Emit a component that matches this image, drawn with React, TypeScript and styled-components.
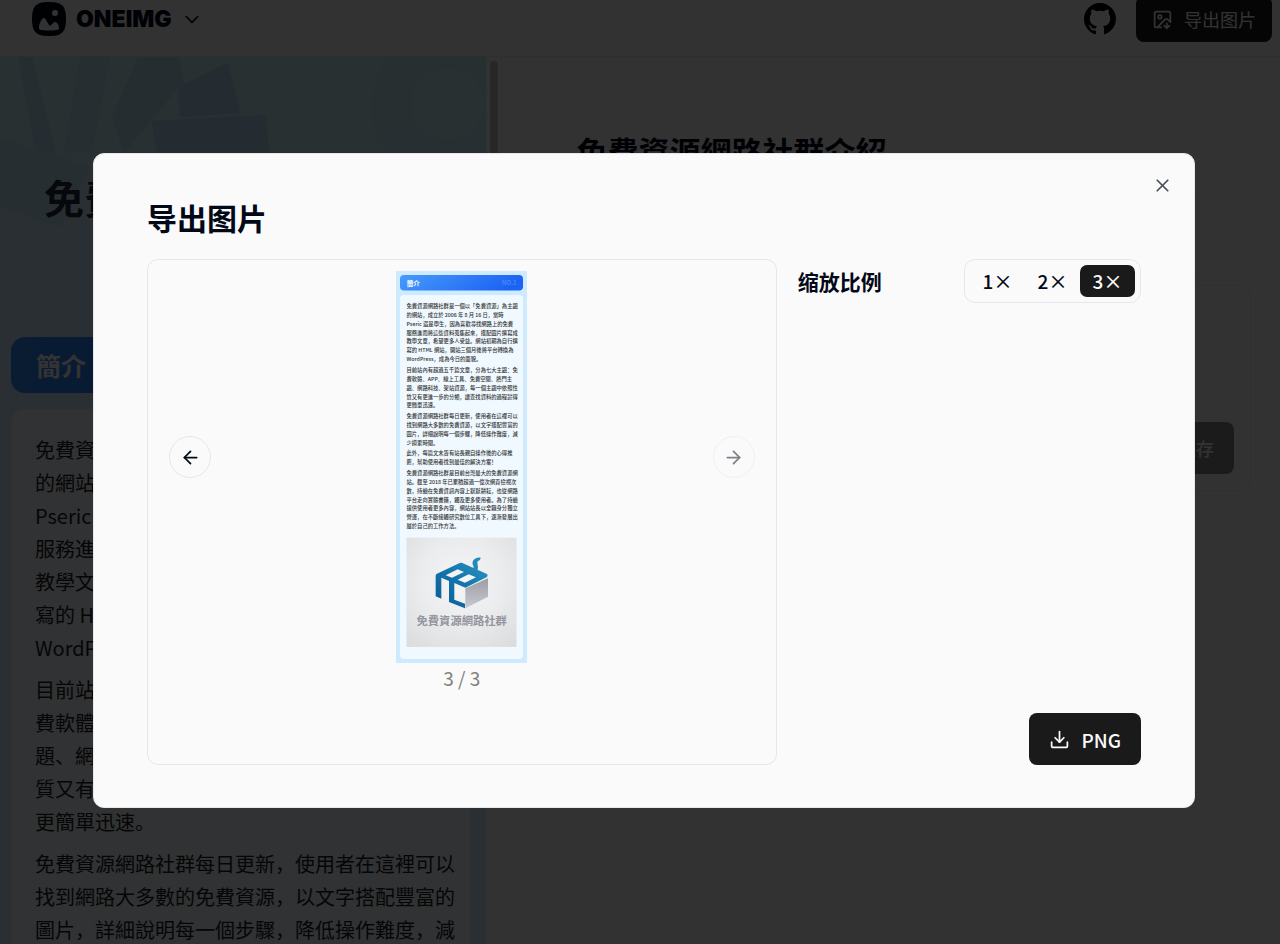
import React from "react";
import styled, { createGlobalStyle, css } from "styled-components";

const FONT = `"Noto Sans CJK SC", "Noto Sans", sans-serif`;

const GlobalStyle = createGlobalStyle`
  *, *::before, *::after { box-sizing: border-box; }
  body {
    margin: 0;
    overflow: hidden;
    background: #fafafa;
    color: #020817;
    font-family: ${FONT};
  }
  button { font: inherit; color: inherit; border: 0; padding: 0; background: none; cursor: pointer; }
  h1, h2, p { margin: 0; }
`;

const PARAGRAPHS: string[][] = [
  [
    "免費資源網路社群是一個以「免費資源」為主題",
    "的網站，成立於 2006 年 8 月 16 日，當時",
    "Pseric 還是學生，因為喜歡尋找網路上的免費",
    "服務進而將這些資料蒐集起來，搭配圖片撰寫成",
    "教學文章，希望更多人受益。網站初期為自行撰",
    "寫的 HTML 網站，開站三個月後將平台轉換為",
    "WordPress，成為今日的面貌。",
  ],
  [
    "目前站內有超過五千篇文章，分為七大主題：免",
    "費軟體、APP、線上工具、免費空間、熱門主",
    "題、網路科技、架站資源，每一個主題中依照性",
    "質又有更進一步的分類，讓查找資料的過程變得",
    "更簡單迅速。",
  ],
  [
    "免費資源網路社群每日更新，使用者在這裡可以",
    "找到網路大多數的免費資源，以文字搭配豐富的",
    "圖片，詳細說明每一個步驟，降低操作難度，減",
    "少摸索時間。",
  ],
  [
    "此外，每篇文末皆有站長親自操作後的心得推",
    "薦，幫助使用者找到最佳的解決方案！",
  ],
  [
    "免費資源網路社群是目前台灣最大的免費資源網",
    "站。截至 2018 年已累積超過一億次網頁檢視次",
    "數，持續在免費資訊內容上默默耕耘，也從網路",
    "平台走向實體書籍，觸及更多使用者。為了持續",
    "提供使用者更多內容，網站站長以全職身分獨立",
    "營運，在不斷接觸研究數位工具下，逐漸發展出",
    "屬於自己的工作方法。",
  ],
];

/* ---------- page behind the dialog ---------- */

const Page = styled.div`
  display: flex;
  flex-direction: column;
  height: calc(100vh + 18px);
  margin-top: -18px;
  overflow: hidden;
`;

const TopBar = styled.header`
  flex: none;
  display: flex;
  align-items: center;
  justify-content: space-between;
  height: 75px;
  padding: 0 8px 0 32px;
  border-bottom: 1px solid #e5e7eb;
`;

const Brand = styled.button`
  display: flex;
  align-items: center;
  gap: 10px;
`;

const BrandName = styled.span`
  font: 900 23px/34px Inter, sans-serif;
`;

const Actions = styled.div`
  display: flex;
  align-items: center;
  gap: 20px;
`;

const IconLink = styled.a`
  display: flex;
  color: #000;
`;

const SolidButton = styled.button`
  display: inline-flex;
  align-items: center;
  justify-content: center;
  gap: 11px;
  height: 52px;
  padding: 0 20px;
  border-radius: 8px;
  background: #1a1a1a;
  color: #fafafa;
  font-size: 19px;
  font-weight: 500;
  &:disabled { opacity: 0.5; }
`;

const ExportButton = styled(SolidButton)`
  height: 46px;
  padding: 0 16px;
  font-size: 18px;
  font-weight: 400;
`;

const SaveButton = styled(SolidButton)`
  font-size: 18px;
`;

const Columns = styled.div`
  flex: 1;
  min-height: 0;
  display: flex;
`;

const Poster = styled.section`
  position: relative;
  flex: none;
  width: 38%;
  overflow: hidden;
  background: #cdeafe;
`;

const HeroArt = styled.svg`
  position: absolute;
  top: 0;
  left: 0;
  width: 100%;
  height: 280px;
`;

const Hero = styled.div`
  position: relative;
  height: 280px;
  padding: 110px 44px 0;
  h1 { font-size: 40px; line-height: 60px; color: #1f2937; white-space: nowrap; }
`;

const PosterBody = styled.div`
  position: relative;
  display: flex;
  flex-direction: column;
  gap: 16px;
  padding: 0 16px 0 11px;
`;

const SectionTitle = styled.h2`
  height: 56px;
  padding: 0 25px;
  border-radius: 14px;
  background: linear-gradient(100deg, #2f8cfa, #1d62f0);
  color: #fff;
  font-size: 25px;
  line-height: 56px;
`;

const Prose = styled.div`
  display: flex;
  flex-direction: column;
  gap: 9px;
  padding: 24px;
  border-radius: 14px;
  background: #f0f9ff;
  color: #1f1f1f;
`;

const Line = styled.span`
  display: block;
  font-size: 20px;
  line-height: 33px;
  white-space: nowrap;
`;

const ScrollTrack = styled.div`
  flex: none;
  width: 16px;
  padding: 4px 3px 4px 4px;
  border-right: 1px solid #f1f1f3;
`;

const ScrollThumb = styled.div`
  height: 300px;
  border-radius: 4px;
  background: #c0c0c0;
`;

const Editor = styled.section`
  flex: 1;
  min-width: 0;
  padding: 74px 29px 0 42px;
`;

const EditorTitle = styled.h2`
  padding: 0 32px;
  font-size: 31px;
  line-height: 40px;
`;

const Rule = styled.hr<{ $top: number }>`
  margin: ${(p) => p.$top}px 33px 0;
  border: 0;
  border-top: 1px solid #eceef3;
`;

const EditorCard = styled.div`
  display: flex;
  align-items: flex-end;
  justify-content: flex-end;
  height: 206px;
  margin-top: 10px;
  padding: 16px;
  border: 1px solid #e9ebf0;
  border-radius: 10px;
`;

/* ---------- dialog ---------- */

const Overlay = styled.div`
  position: fixed;
  inset: 0;
  display: flex;
  align-items: flex-start;
  padding: 153px 85px 0 93px;
  background: rgba(0, 0, 0, 0.8);
`;

const Dialog = styled.div`
  position: relative;
  flex: 1;
  display: flex;
  flex-direction: column;
  gap: 19px;
  padding: 41px 53px 42px;
  border: 1px solid #e5e7eb;
  border-radius: 11px;
  background: #fafafa;
`;

const DialogTitle = styled.h2`
  font-size: 30px;
  line-height: 45px;
`;

const CloseButton = styled.button`
  position: absolute;
  top: 21px;
  right: 21px;
  display: flex;
  opacity: 0.7;
`;

const DialogBody = styled.div`
  display: flex;
  gap: 21px;
  min-height: 506px;
`;

const PreviewPane = styled.div`
  flex: 629 1 0;
  border: 1px solid #e5e7eb;
  border-radius: 11px;
`;

const Carousel = styled.div`
  display: flex;
  align-items: center;
  justify-content: space-between;
  padding: 11px 21px 0;
`;

const RoundButton = styled.button`
  display: flex;
  align-items: center;
  justify-content: center;
  width: 42px;
  height: 42px;
  margin-bottom: 20px;
  border: 1px solid #e5e7eb;
  border-radius: 50%;
  &:disabled { opacity: 0.5; }
`;

const PageCount = styled.p`
  color: #808080;
  font-size: 19px;
  line-height: 30px;
  text-align: center;
`;

const Options = styled.div`
  flex: 344 1 0;
  display: flex;
  flex-direction: column;
  justify-content: space-between;
  align-items: flex-end;
`;

const ScaleRow = styled.div`
  align-self: stretch;
  display: flex;
  align-items: center;
  justify-content: space-between;
`;

const ScaleLabel = styled.span`
  font-size: 21px;
  font-weight: 700;
  line-height: 32px;
`;

const Segments = styled.div`
  display: flex;
  padding: 5px;
  border: 1px solid #e5e7eb;
  border-radius: 11px;
`;

const Segment = styled.button<{ $active?: boolean }>`
  width: 55px;
  height: 32px;
  border-radius: 7px;
  font-size: 19px;
  font-weight: 500;
  line-height: 32px;
  ${(p) => p.$active && css`background: #1a1a1a; color: #fafafa;`}
`;

/* ---------- icons ---------- */

type IconProps = { size?: number; width?: number; children: React.ReactNode };

const Icon = ({ size = 21, width = 2, children }: IconProps) => (
  <svg
    width={size}
    height={size}
    viewBox="0 0 24 24"
    fill="none"
    stroke="currentColor"
    strokeWidth={width}
    strokeLinecap="round"
    strokeLinejoin="round"
    aria-hidden="true"
  >
    {children}
  </svg>
);

const BrandMark = () => (
  <svg width="34" height="34" viewBox="0 0 34 34" aria-hidden="true">
    <path
      d="M17 0C29 0 34 3 34 17S29 34 17 34 0 31 0 17 5 0 17 0Z"
      fill="#020817"
    />
    <circle cx="23" cy="11" r="3" fill="#fafafa" />
    <path
      d="M7 26C7 21 10 16 12 16S15 21 18 24C20 23 21 20 23 20S27 23 27 26Q27 28 24 28Q17 29 10 28Q7 28 7 26Z"
      fill="#fafafa"
    />
  </svg>
);

const GithubMark = () => (
  <svg width="32" height="32" viewBox="0 0 16 16" fill="currentColor" aria-hidden="true">
    <path d="M8 0C3.58 0 0 3.58 0 8c0 3.54 2.29 6.53 5.47 7.59.4.07.55-.17.55-.38 0-.19-.01-.82-.01-1.49-2.01.37-2.53-.49-2.69-.94-.09-.23-.48-.94-.82-1.13-.28-.15-.68-.52-.01-.53.63-.01 1.08.58 1.23.82.72 1.21 1.87.87 2.33.66.07-.52.28-.87.51-1.07-1.78-.2-3.64-.89-3.64-3.95 0-.87.31-1.59.82-2.15-.08-.2-.36-1.02.08-2.12 0 0 .67-.21 2.2.82.64-.18 1.32-.27 2-.27s1.36.09 2 .27c1.53-1.04 2.2-.82 2.2-.82.44 1.1.16 1.92.08 2.12.51.56.82 1.27.82 2.15 0 3.07-1.87 3.75-3.65 3.95.29.25.54.73.54 1.48 0 1.07-.01 1.93-.01 2.2 0 .21.15.46.55.38A8.01 8.01 0 0 0 16 8c0-4.42-3.58-8-8-8Z" />
  </svg>
);

/* Rendered page image shown in the carousel, ten units to a pixel. */
const PagePreview = () => {
  let y = 262;
  return (
    <svg
      width="131"
      height="392"
      viewBox="0 0 1310 3920"
      role="img"
      aria-label="簡介"
      fontFamily={FONT}
    >
      <defs>
        <linearGradient id="bar" x1="0" x2="1" y1="0" y2="0.2">
          <stop offset="0" stopColor="#479bfb" />
          <stop offset="1" stopColor="#1c63f3" />
        </linearGradient>
        <radialGradient id="photo" cx="0.5" cy="0.4" r="0.75">
          <stop offset="0" stopColor="#f5f5f6" />
          <stop offset="0.5" stopColor="#ebeced" />
          <stop offset="1" stopColor="#dadcde" />
        </radialGradient>
        <linearGradient id="blue" x1="0" x2="1" y1="1" y2="0">
          <stop offset="0" stopColor="#0d5b93" />
          <stop offset="0.5" stopColor="#1273ad" />
          <stop offset="1" stopColor="#2a94bf" />
        </linearGradient>
        <linearGradient id="side" x1="0" x2="0" y1="0" y2="1">
          <stop offset="0" stopColor="#9b9ca6" />
          <stop offset="1" stopColor="#c9cacf" />
        </linearGradient>
      </defs>
      <rect width="1310" height="3920" fill="#cdeafe" />
      <rect x="40" y="40" width="1230" height="155" rx="40" fill="url(#bar)" />
      <text x="107" y="147" fontSize="66" fontWeight="700" fill="#fff">簡介</text>
      <text x="1205" y="144" fontSize="62" fontWeight="500" fill="#4d8df7" textAnchor="end">NO.1</text>
      <rect x="40" y="240" width="1230" height="3640" rx="40" fill="#f0f9ff" />
      {PARAGRAPHS.map((lines) => {
        y += 17;
        return lines.map((line) => {
          y += 89;
          return (
            <text key={line} x="105" y={y} fontSize="53" fontWeight="500" fill="#333">{line}</text>
          );
        });
      })}
      <rect x="105" y="2667" width="1100" height="1092" fill="url(#photo)" />
      <g transform="translate(-60 2540) scale(3.333)">
        <path
          fill="url(#blue)"
          fillRule="evenodd"
          d="M137 152Q137 148 141 146L209 114Q213 112 217 114L291 147Q295 150 291 156L226 188L193 174V224L225 236V250L177 231V168L154 158V221L137 214ZM167 151L186 158L222 141L203 133ZM203 164L225 173L258 157L236 148Z"
        />
        <path fill="#2389b8" d="M249 132Q253 126 248 118Q246 108 254 102Q262 97 272 98Q272 106 264 108Q260 111 263 119Q266 129 261 138Z" />
        <path fill="url(#side)" d="M226 190L294 160V215L226 250Z" />
      </g>
      <text x="657" y="3540" fontSize="113" fontWeight="700" fill="#93959f" textAnchor="middle">
        免費資源網路社群
      </text>
    </svg>
  );
};

export default function App() {
  return (
    <>
      <GlobalStyle />
      <Page>
        <TopBar>
          <Brand type="button">
            <BrandMark />
            <BrandName>ONEIMG</BrandName>
            <Icon size={20}><path d="m5 9 7 7 7-7" /></Icon>
          </Brand>
          <Actions>
            <IconLink href="#github" aria-label="GitHub"><GithubMark /></IconLink>
            <ExportButton type="button">
              <Icon>
                <path d="M10.3 21H5a2 2 0 0 1-2-2V5a2 2 0 0 1 2-2h14a2 2 0 0 1 2 2v10l-3.1-3.1a2 2 0 0 0-2.814.014L6 21" />
                <path d="m14 19 3 3v-5.5" />
                <path d="m17 22 3-3" />
                <circle cx="9" cy="9" r="2" />
              </Icon>
              导出图片
            </ExportButton>
          </Actions>
        </TopBar>
        <Columns>
          <Poster>
            <HeroArt viewBox="0 0 487 280" preserveAspectRatio="none" aria-hidden="true">
              <defs>
                <linearGradient id="hero" x1="0" x2="0" y1="0" y2="1">
                  <stop offset="0" stopColor="#c8eef8" />
                  <stop offset="1" stopColor="#cdeafe" />
                </linearGradient>
              </defs>
              <rect width="487" height="280" fill="url(#hero)" />
              <g opacity="0.5">
                <circle cx="450" cy="50" r="78" fill="#bfe6f5" />
                <circle cx="448" cy="47" r="36" fill="#c6effa" />
                <path d="M18 0H32L56 96H36Z" fill="#b4d6f5" />
                <path d="M80 0H110L92 96H64Z" fill="#b9dcf2" />
                <path d="M138 0H180L184 24L124 96L112 60Z" fill="#b3d6f3" />
                <path d="M178 30L228 6L241 56L180 60Z" fill="#a8c8f2" />
                <path d="M152 64L266 58L272 120H160Z" fill="#aac8f0" />
                <path d="M0 80L90 110L60 170L0 150Z" fill="#b8e3ee" />
              </g>
            </HeroArt>
            <Hero><h1>免費資源網路社群</h1></Hero>
            <PosterBody>
              <SectionTitle>簡介</SectionTitle>
              <Prose>
                {PARAGRAPHS.map((lines) => (
                  <p key={lines[0]}>
                    {lines.map((line) => <Line key={line}>{line}</Line>)}
                  </p>
                ))}
              </Prose>
            </PosterBody>
          </Poster>
          <ScrollTrack><ScrollThumb /></ScrollTrack>
          <Editor>
            <EditorTitle>免費資源網路社群介紹</EditorTitle>
            <Rule $top={23} />
            <Rule $top={79} />
            <EditorCard>
              <SaveButton type="button" disabled>保存</SaveButton>
            </EditorCard>
          </Editor>
        </Columns>
      </Page>

      <Overlay>
        <Dialog role="dialog" aria-modal="true" aria-labelledby="export-title">
          <DialogTitle id="export-title">导出图片</DialogTitle>
          <CloseButton type="button" aria-label="关闭">
            <Icon><path d="M18 6 6 18" /><path d="m6 6 12 12" /></Icon>
          </CloseButton>
          <DialogBody>
            <PreviewPane>
              <Carousel>
                <RoundButton type="button" aria-label="上一张">
                  <Icon><path d="m12 19-7-7 7-7" /><path d="M19 12H5" /></Icon>
                </RoundButton>
                <PagePreview />
                <RoundButton type="button" aria-label="下一张" disabled>
                  <Icon><path d="M5 12h14" /><path d="m12 5 7 7-7 7" /></Icon>
                </RoundButton>
              </Carousel>
              <PageCount>3 / 3</PageCount>
            </PreviewPane>
            <Options>
              <ScaleRow>
                <ScaleLabel id="scale-label">缩放比例</ScaleLabel>
                <Segments role="group" aria-labelledby="scale-label">
                  <Segment type="button">1×</Segment>
                  <Segment type="button">2×</Segment>
                  <Segment type="button" $active aria-pressed="true">3×</Segment>
                </Segments>
              </ScaleRow>
              <SolidButton type="button">
                <Icon>
                  <path d="M21 15v4a2 2 0 0 1-2 2H5a2 2 0 0 1-2-2v-4" />
                  <path d="m7 10 5 5 5-5" />
                  <path d="M12 15V3" />
                </Icon>
                PNG
              </SolidButton>
            </Options>
          </DialogBody>
        </Dialog>
      </Overlay>
    </>
  );
}
